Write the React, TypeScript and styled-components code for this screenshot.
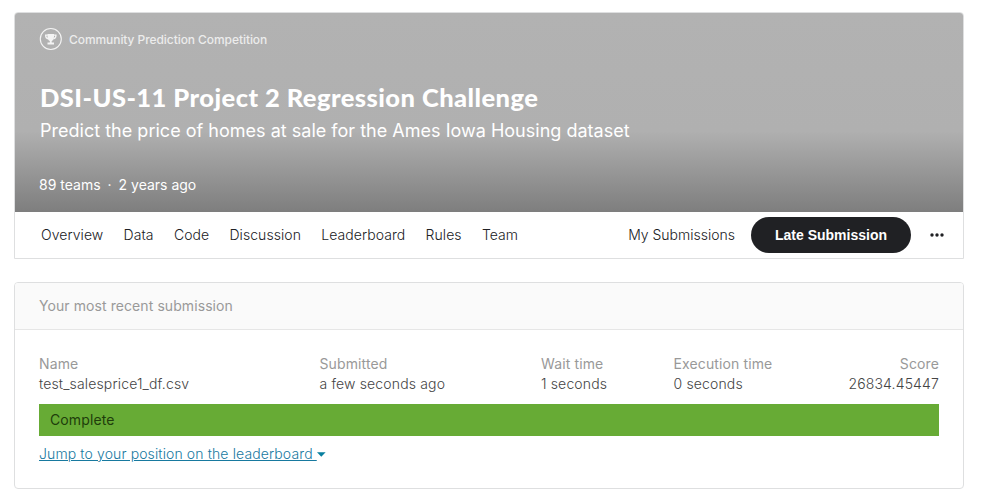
import React from "react";
import styled, { createGlobalStyle } from "styled-components";

const GlobalStyle = createGlobalStyle`
  *, *::before, *::after { box-sizing: border-box; }
  body {
    margin: 0;
    background: #fff;
    font-family: Inter, "Liberation Sans", sans-serif;
    font-size: 14px;
    line-height: 20px;
  }
`;

const Page = styled.main`
  width: 950px;
  margin-left: 14px;
  padding-top: 12px;
`;

const CompetitionCard = styled.section`
  height: 247px;
  border: 1px solid #dedfe0;
  border-radius: 4px 4px 0 0;
  overflow: hidden;
`;

const Hero = styled.header`
  height: 199px;
  padding: 14px 24px 0;
  color: #fff;
  background: linear-gradient(#b2b2b2 0, #b0b0b0 118px, #7e7e7e 199px);
`;

const Kind = styled.div`
  display: flex;
  align-items: center;
  gap: 7px;
  height: 24px;
  font-size: 12px;
  font-weight: 500;
  letter-spacing: -0.07px;
  color: #ececec;
`;

const KindLabel = styled.span`
  padding-top: 2px;
`;

const Title = styled.h1`
  margin: 32px 0 0 1px;
  height: 32px;
  font: 900 25.5px/29px Lato, "Noto Sans", sans-serif;
  white-space: nowrap;
  letter-spacing: 0.44px;
`;

const Subtitle = styled.p`
  margin: 3px 0 0 1px;
  font-size: 18px;
  line-height: 26px;
  letter-spacing: 0.015px;
`;

const Stats = styled.div`
  display: flex;
  gap: 7px;
  margin-top: 31px;
  line-height: 20px;
`;

const Nav = styled.nav`
  display: flex;
  align-items: center;
  height: 46px;
  padding: 0 19px 0 26px;
  background: #fff;
`;

const Tabs = styled.div`
  display: flex;
  gap: 20.3px;
  flex: 1;
  letter-spacing: 0.06px;
`;

const NavLink = styled.a`
  color: #202124;
  font-weight: 300;
`;

const LateButton = styled.button`
  width: 160px;
  height: 36px;
  margin: 0 19px 0 16px;
  padding: 0;
  border: 0;
  border-radius: 18px;
  background: #202124;
  color: #fff;
  font: 700 14px/20px "Liberation Sans", Arial, sans-serif;
`;

const SubmissionCard = styled.section`
  height: 207px;
  margin-top: 23px;
  border: 1px solid #dedfe0;
  border-radius: 4px;
  overflow: hidden;
`;

const CardHeader = styled.h2`
  margin: 0;
  height: 47px;
  padding: 0 24px;
  border-bottom: 1px solid #e6e6e6;
  background: #fafafa;
  color: #999;
  font-size: 14px;
  font-weight: 400;
  line-height: 46px;
  letter-spacing: 0.08px;
`;

const CardBody = styled.div`
  padding: 24px 24px 0;
  letter-spacing: 0.12px;
`;

const Details = styled.dl`
  display: grid;
  grid-template-columns: 280.5px 221.5px 132.5px 1fr auto;
  margin: 0;
`;

const Detail = styled.div<{ $end?: boolean }>`
  text-align: ${(p) => (p.$end ? "right" : "left")};
`;

const Label = styled.dt`
  color: #999;
`;

const Value = styled.dd`
  margin: 0;
  color: #444;
  font-weight: 300;
  letter-spacing: 0.15px;
`;

const Status = styled.div`
  height: 32px;
  margin-top: 10px;
  padding-left: 11px;
  background: #67ab35;
  color: #203d0b;
  line-height: 32px;
`;

const JumpLink = styled.a`
  display: flex;
  align-items: center;
  width: max-content;
  margin-top: 8px;
  color: #17799f;
  font-weight: 300;
`;

const LinkText = styled.span`
  white-space: pre;
  text-decoration: underline;
`;

const TrophyIcon = () => (
  <svg width="23" height="24" viewBox="0 0 23 24" fill="none" aria-hidden="true">
    <circle cx="11.8" cy="12" r="10.5" stroke="#f4f4f4" strokeWidth="1.1" />
    <path d="M8.500 7h6.500v2.200c0 2.700-1 4.300-2.300 4.900v1.500h2.300v1.900H8.500v-1.900h2.300v-1.500C9.500 13.500 8.500 11.900 8.500 9.200Z" fill="#f4f4f4" />
    <path d="M8.800 8.200H6.600c0 2.200.9 3.300 2.700 3.600M14.800 8.200H17c0 2.200-.9 3.300-2.700 3.600" stroke="#f4f4f4" strokeWidth="1.200" />
  </svg>
);

const MoreIcon = () => (
  <svg width="14" height="4" viewBox="0 0 14 4" fill="#202124" aria-label="More">
    <circle cx="2" cy="2" r="1.700" />
    <circle cx="7" cy="2" r="1.700" />
    <circle cx="12" cy="2" r="1.700" />
  </svg>
);

const CaretIcon = () => (
  <svg width="9" height="5" viewBox="0 0 9 5" fill="#087f9f" aria-hidden="true">
    <path d="M0 .2h8.600L4.300 4.800Z" />
  </svg>
);

const tabs = ["Overview", "Data", "Code", "Discussion", "Leaderboard", "Rules", "Team"];

const details = [
  { label: "Name", value: "test_salesprice1_df.csv" },
  { label: "Submitted", value: "a few seconds ago" },
  { label: "Wait time", value: "1 seconds" },
  { label: "Execution time", value: "0 seconds" },
  { label: "Score", value: "26834.45447", end: true },
];

export default function App() {
  return (
    <>
      <GlobalStyle />
      <Page>
        <CompetitionCard>
          <Hero>
            <Kind>
              <TrophyIcon />
              <KindLabel>Community Prediction Competition</KindLabel>
            </Kind>
            <Title>DSI-US-11 Project 2 Regression Challenge</Title>
            <Subtitle>Predict the price of homes at sale for the Ames Iowa Housing dataset</Subtitle>
            <Stats>
              <span>89 teams</span>
              <span>·</span>
              <span>2 years ago</span>
            </Stats>
          </Hero>
          <Nav>
            <Tabs>
              {tabs.map((tab) => (
                <NavLink key={tab}>{tab}</NavLink>
              ))}
            </Tabs>
            <NavLink>My Submissions</NavLink>
            <LateButton>Late Submission</LateButton>
            <MoreIcon />
          </Nav>
        </CompetitionCard>
        <SubmissionCard>
          <CardHeader>Your most recent submission</CardHeader>
          <CardBody>
            <Details>
              {details.map((d) => (
                <Detail key={d.label} $end={d.end}>
                  <Label>{d.label}</Label>
                  <Value>{d.value}</Value>
                </Detail>
              ))}
            </Details>
            <Status>Complete</Status>
            <JumpLink>
              <LinkText>Jump to your position on the leaderboard </LinkText>
              <CaretIcon />
            </JumpLink>
          </CardBody>
        </SubmissionCard>
      </Page>
    </>
  );
}
